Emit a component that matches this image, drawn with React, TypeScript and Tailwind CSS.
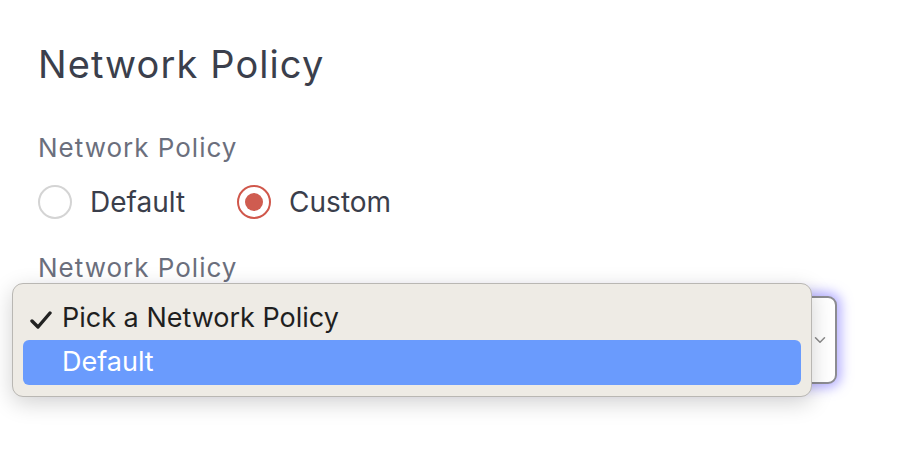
import { ChevronDown } from "lucide-react";

function Radio({ label, checked }: { label: string; checked?: boolean }) {
  return (
    <label className="flex items-center gap-[18px]">
      <span
        className={
          checked
            ? "w-[34px] h-[34px] rounded-full border-[2px] border-[#d0574b] flex items-center justify-center"
            : "w-[34px] h-[34px] rounded-full border-[2px] border-[#d4d4d4]"
        }
      >
        {checked && <span className="w-[18px] h-[18px] rounded-full bg-[#cf5c50]" />}
      </span>
      <span className="text-[28px] leading-[34px] text-[#3a3e4b]">{label}</span>
    </label>
  );
}

export default function App() {
  return (
    <div
      className="w-[914px] h-[462px] bg-white overflow-hidden"
      style={{ fontFamily: "Inter, 'Noto Sans', sans-serif" }}
    >
      <div className="pl-[38px] pt-[40px] w-[837px]">
        <h1 className="text-[38px] leading-[48px] tracking-[1.1px] text-[#3b3f4c] font-normal">Network Policy</h1>

        <p className="mt-[43px] text-[26px] leading-[34px] tracking-[1px] text-[#6b6f7d]">Network Policy</p>
        <div className="mt-[20px] flex items-center gap-[52px]">
          <Radio label="Default" />
          <Radio label="Custom" checked />
        </div>

        <p className="mt-[32px] text-[26px] leading-[34px] tracking-[1px] text-[#6b6f7d]">Network Policy</p>

        {/* select with native open menu over it */}
        <div className="relative mt-[11px]">
          <div className="h-[88px] rounded-[9px] border-[2px] border-[#8c8c91] bg-white shadow-[0_0_12px_4px_rgba(120,110,255,0.55)] flex items-center justify-end pr-[6px]">
            <ChevronDown size={18} strokeWidth={2} className="text-[#8a8a8a]" />
          </div>

          <div className="absolute left-[-26px] top-[-13px] w-[800px] rounded-[11px] border border-[#b9b7b3] bg-[#eeebe5] shadow-[0_6px_22px_rgba(0,0,0,0.18)] px-[10px] py-[11px]">
            <div className="h-[45px] flex items-center pt-[2px]">
              <span className="w-[39px] pl-[7px]">
                <svg width="22" height="20" viewBox="0 0 22 20" className="mt-[2px]">
                  <path d="M2 11 L8 17 L20 3" fill="none" stroke="#222" strokeWidth="3.4" strokeLinecap="round" strokeLinejoin="round" />
                </svg>
              </span>
              <span className="text-[27px] text-[#1f1f1f]">Pick a Network Policy</span>
            </div>
            <div className="h-[45px] flex items-center rounded-[6px] bg-[#6a9bfd]">
              <span className="pl-[39px] text-[27px] text-white">Default</span>
            </div>
          </div>
        </div>
      </div>
    </div>
  );
}
